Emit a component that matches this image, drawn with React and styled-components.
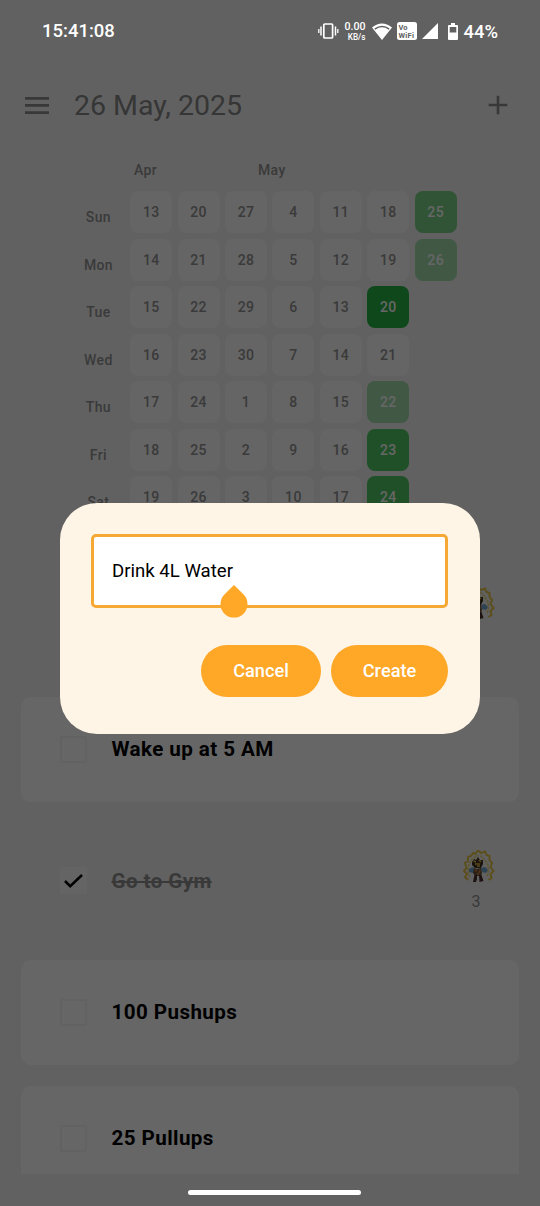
import React from "react";
import styled, { createGlobalStyle } from "styled-components";

const GlobalStyle = createGlobalStyle`
  * { box-sizing: border-box; }
  body { margin: 0; background: #f3f3f3; font-family: Roboto, "Liberation Sans", sans-serif; }
`;

const Screen = styled.div`
  position: relative;
  width: 540px;
  height: 1206px;
  overflow: hidden;
  display: flex;
  flex-direction: column;
  background: #f3f3f3;
`;

const StatusBar = styled.header`
  position: relative;
  z-index: 2;
  height: 62px;
  padding: 0 42px 0 42px;
  display: flex;
  align-items: center;
  color: #fff;
`;

const Clock = styled.span`
  flex: 1;
  font-size: 18.5px;
  font-weight: 500;
`;

const StatusIcon = styled.svg`
  display: block;
  flex: none;
  margin-left: ${(p) => p.$gap || 0}px;
`;

const NetSpeed = styled.span`
  width: 22px;
  margin-left: 5px;
  margin-right: 1px;
  display: flex;
  flex-direction: column;
  align-items: flex-end;
  font-weight: 500;
  font-size: 10.6px;
  line-height: 11px;
  small { font-size: 8.2px; line-height: 10px; }
`;

const Battery = styled.span`
  margin-left: 6px;
  font-size: 18.4px;
  font-weight: 500;
`;

const AppBar = styled.div`
  height: 88px;
  padding: 0 32px 2px 25px;
  display: flex;
  align-items: center;
  color: #8c8c8c;
`;

const Title = styled.h1`
  flex: 1;
  margin: 0 0 0 25px;
  font-size: 28.5px;
  font-weight: 400;
  color: #878787;
`;

const Calendar = styled.section`
  height: 409.5px;
  flex: none;
  padding: 10px 0 0 67px;
`;

const Months = styled.div`
  height: 31px;
  padding-left: 67px;
  display: flex;
  font-size: 14px;
  line-height: 20px;
  font-weight: 500;
  letter-spacing: 0.35px;
  color: #929292;
  span { width: 124px; }
`;

const Week = styled.div`
  height: 42px;
  margin-bottom: 5.5px;
  display: grid;
  grid-template-columns: 57.8px repeat(7, 42px);
  column-gap: 5.42px;
`;

const DayName = styled.span`
  padding-top: 11px;
  padding-left: 5px;
  text-align: center;
  font-size: 14px;
  line-height: 31px;
  font-weight: 500;
  letter-spacing: 0.35px;
  color: #929292;
`;

const levels = {
  none: "#fcfcfc",
  low: "rgba(2, 179, 32, 0.34)",
  mid: "rgba(2, 179, 32, 0.5)",
  high: "rgba(2, 179, 32, 0.68)",
  full: "rgb(38, 180, 68)",
};

const Day = styled.span`
  display: flex;
  align-items: center;
  justify-content: center;
  border-radius: 8px;
  font-size: 14px;
  font-weight: 500;
  letter-spacing: 0.35px;
  background: ${(p) => levels[p.$level]};
  color: ${(p) => (p.$level === "none" ? "#929292" : "#fff")};
`;

const HabitList = styled.main`
  height: 614.5px;
  flex: none;
  overflow: hidden;
`;

const Habit = styled.article`
  height: ${(p) => (p.$done ? 116.2 : 105)}px;
  margin: 0 21px 21px;
  padding: 0 26px 0 39px;
  display: flex;
  align-items: center;
  border-radius: 10px;
  background: ${(p) => (p.$done ? "transparent" : "#fff")};
`;

const Check = styled.span`
  width: 27px;
  height: 27px;
  display: flex;
  align-items: center;
  justify-content: center;
  border-radius: 2px;
  border: ${(p) => (p.$done ? "0" : "2px solid #f5f5f5")};
  background: ${(p) => (p.$done ? "#fbfbfb" : "transparent")};
`;

const HabitName = styled.span`
  flex: 1;
  margin-left: 24.5px;
  font-size: 20.6px;
  font-weight: 700;
  letter-spacing: 0.42px;
  color: ${(p) => (p.$done ? "#8e8e8e" : "#000")};
  text-decoration: ${(p) => (p.$done ? "line-through" : "none")};
`;

const Streak = styled.span`
  display: flex;
  flex-direction: column;
  align-items: center;
  width: 31px;
  font-size: 16px;
  line-height: 20px;
  color: #8f8f8f;
  svg { margin-bottom: 6px; }
  span { margin-right: 3px; }
`;

const Scrim = styled.div`
  position: absolute;
  inset: 0;
  z-index: 1;
  display: flex;
  justify-content: center;
  align-items: flex-start;
  padding-top: 503px;
  background: rgba(0, 0, 0, 0.6);
`;

const Dialog = styled.div`
  width: 420px;
  height: 231px;
  padding: 31px 32px 0 31px;
  border-radius: 37px;
  background: #fff5e6;
`;

const Field = styled.div`
  position: relative;
  height: 74px;
  padding-left: 18px;
  display: flex;
  align-items: center;
  border: 3px solid #f5a833;
  border-radius: 5px;
  background: #fff;
  font-size: 18.6px;
  color: #000;
`;

const CursorHandle = styled.svg`
  position: absolute;
  left: 126px;
  top: 47.5px;
`;

const Actions = styled.div`
  margin-top: 37px;
  display: flex;
  justify-content: flex-end;
  gap: 10px;
`;

const Button = styled.button`
  width: ${(p) => p.$width}px;
  height: 52px;
  padding: 0 0 2px;
  border: 0;
  border-radius: 26px;
  background: #ffa726;
  color: #fff;
  font-family: inherit;
  font-size: 18.2px;
  font-weight: 500;
`;

const NavBar = styled.footer`
  position: relative;
  z-index: 2;
  flex: 1;
  padding: 16px 0 0 188px;
`;

const NavPill = styled.div`
  width: 173px;
  height: 5px;
  border-radius: 3px;
  background: #fff;
`;

const dayNames = ["Sun", "Mon", "Tue", "Wed", "Thu", "Fri", "Sat"];
const weeks = [
  [13, 20, 27, 4, 11, 18, 25],
  [14, 21, 28, 5, 12, 19, 26],
  [15, 22, 29, 6, 13, 20],
  [16, 23, 30, 7, 14, 21],
  [17, 24, 1, 8, 15, 22],
  [18, 25, 2, 9, 16, 23],
  [19, 26, 3, 10, 17, 24],
];
const activity = { "0-6": "mid", "1-6": "low", "2-5": "full", "4-5": "low", "5-5": "high", "6-5": "high" };

const habits = [
  { name: "", done: true, streak: 1 },
  { name: "Wake up at 5 AM" },
  { name: "Go to Gym", done: true, streak: 3 },
  { name: "100 Pushups" },
  { name: "25 Pullups" },
];

function FlameWarrior() {
  return (
    <svg width="34" height="36" viewBox="0 0 34 36" fill="none">
      <path d="M7 30 4 27l2-3-3-3 2.500-3-1.500-5 3-2 0-4 3-1 2-3 2.500 1 2.500-4 3 3 4-1.500 1.500 3.500 3 1 0 4 2.500 3-1.500 4 3 4-3 3 1 4-3 2" stroke="#e2b91c" strokeOpacity=".8" strokeWidth="2" />
      <path d="M8.500 27 7 20l1-6 3-5 5-3h4l4 4 3 5 .5 6-1.500 6" stroke="#e8c645" strokeOpacity=".75" strokeWidth="1.600" strokeDasharray="2.500 1" />
      <path d="m11 12 2-3 2 1 2-3 2 3 3 0 0 4-2 4h-6l-3-3z" fill="#3f3520" />
      <path d="m12.500 11 2.500 1m3-2 2 2m-6 2h5m-3 2h3" stroke="#e8b84c" strokeWidth="1.600" />
      <path d="m8 19 4-2 2 3-2 3-4-1zM20 18l4-1 3 3-2 3-4-1z" fill="#6fa3cc" />
      <path d="m13 18 3 1 4-1 1 5-1 3h-6l-2-3z" fill="#6b5438" />
      <path d="m14 20 2 1m3-1-1 3m-2 1h2" stroke="#d5794a" strokeWidth="1.400" />
      <path d="m13.500 25 2.500 0 0 4-1 3h-3zM18 25h2.500l2 6-4 1z" fill="#4a2f2a" />
    </svg>
  );
}

export default function App() {
  return (
    <Screen>
      <GlobalStyle />
      <StatusBar>
        <Clock>15:41:08</Clock>
        <StatusIcon width="21" height="16" viewBox="0 0 21 16" fill="none" stroke="#fff">
          <rect x="5.8" y="1" width="8.8" height="14" rx="1" strokeWidth="1.7" />
          <path d="M3 3.5v9M17.5 3.5v9" strokeWidth="1.5" />
          <path d="M.8 6v4M19.8 6v4" strokeWidth="1.3" />
        </StatusIcon>
        <NetSpeed>0.00<small>KB/s</small></NetSpeed>
        <StatusIcon $gap={5} width="20" height="17" viewBox="0 0 20 17">
          <path d="M0 4.5Q10-3.7 20 4.5L10 17Z" fill="#fff" />
          <path d="M2.8 6.1Q10 1 17.2 6.1" fill="none" stroke="#616161" strokeWidth="1.5" />
        </StatusIcon>
        <StatusIcon $gap={5} width="20" height="18" viewBox="0 0 20 18">
          <rect width="20" height="18" rx="2.5" fill="#fff" />
          <text x="1.5" y="8" fontSize="7.5" fontWeight="700" fill="#616161">Vo</text>
          <text x="1.5" y="15.5" fontSize="7.5" fontWeight="700" fill="#616161" textLength="15.5">WiFi</text>
        </StatusIcon>
        <StatusIcon $gap={5} width="16" height="16" viewBox="0 0 16 16">
          <path d="M16 0v16H0Z" fill="#fff" />
        </StatusIcon>
        <StatusIcon $gap={10} width="10" height="17" viewBox="0 0 10 17">
          <path d="M3 0h4v2h2q1 0 1 1v13q0 1-1 1H1q-1 0-1-1V3q0-1 1-1h2Z" fill="#fff" />
          <path d="M1.7 4h6.6v5.5H1.7Z" fill="#616161" />
        </StatusIcon>
        <Battery>44%</Battery>
      </StatusBar>

      <AppBar>
        <svg width="24" height="17" viewBox="0 0 24 17" fill="#8c8c8c">
          <path d="M0 0h24v2.700H0zM0 7.100h24v2.700H0zM0 14.200h24v2.700H0z" />
        </svg>
        <Title>26 May, 2025</Title>
        <svg width="20" height="20" viewBox="0 0 20 20" fill="#8c8c8c">
          <path d="M8.700.700h2.600v8h8v2.600h-8v8H8.700v-8h-8V8.700h8Z" />
        </svg>
      </AppBar>

      <Calendar>
        <Months><span>Apr</span><span>May</span></Months>
        {weeks.map((days, row) => (
          <Week key={row}>
            <DayName>{dayNames[row]}</DayName>
            {days.map((day, col) => (
              <Day key={col} $level={activity[`${row}-${col}`] || "none"}>{day}</Day>
            ))}
          </Week>
        ))}
      </Calendar>

      <HabitList>
        {habits.map((habit, i) => (
          <Habit key={i} $done={habit.done}>
            <Check $done={habit.done}>
              {habit.done && (
                <svg width="19" height="14" viewBox="0 0 19 14" fill="none" stroke="#000" strokeWidth="2.5">
                  <path d="m1 7 5.200 5.200L18 1" />
                </svg>
              )}
            </Check>
            <HabitName $done={habit.done}>{habit.name}</HabitName>
            {habit.streak && <Streak><FlameWarrior /><span>{habit.streak}</span></Streak>}
          </Habit>
        ))}
      </HabitList>

      <NavBar><NavPill /></NavBar>

      <Scrim>
        <Dialog>
          <Field>
            Drink 4L Water
            <CursorHandle width="28" height="33" viewBox="0 0 28 33">
              <path d="M14 0 23.600 9.600A13.500 13.500 0 1 1 4.400 9.600Z" fill="#ffa726" />
            </CursorHandle>
          </Field>
          <Actions>
            <Button $width={120}>Cancel</Button>
            <Button $width={117}>Create</Button>
          </Actions>
        </Dialog>
      </Scrim>
    </Screen>
  );
}
